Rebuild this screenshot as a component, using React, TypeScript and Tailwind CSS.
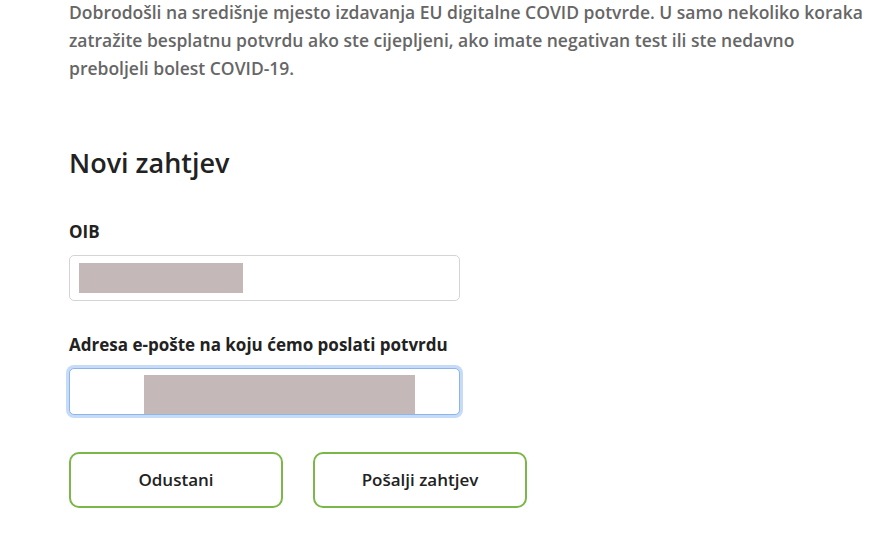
export default function App() {
  return (
    <div className="min-h-screen w-full bg-white pl-[69px] font-['Open_Sans',sans-serif]">
      <p className="-mt-[2px] text-[17.5px] font-semibold leading-[28px] text-[#666] whitespace-nowrap">
        Dobrodošli na središnje mjesto izdavanja EU digitalne COVID potvrde. U samo nekoliko koraka
        <br />
        zatražite besplatnu potvrdu ako ste cijepljeni, ako imate negativan test ili ste nedavno
        <br />
        preboljeli bolest COVID-19.
      </p>

      <h2 className="mt-[63px] text-[27px] font-semibold leading-[36px] text-[#222]">Novi zahtjev</h2>

      <label className="mt-[40px] block text-[17px] font-bold leading-[22px] text-[#222]">OIB</label>
      <div className="mt-[12px] flex h-[46px] w-[391px] items-center rounded-[5px] border border-[#d4d4d4] bg-white px-[9px]">
        <div className="h-[30px] w-[164px] bg-[#c4b8b8]" />
      </div>

      <label className="mt-[33px] block text-[17px] font-bold leading-[22px] text-[#222]">
        Adresa e-pošte na koju ćemo poslati potvrdu
      </label>
      <div className="mt-[12px] flex h-[47px] w-[391px] items-end rounded-[5px] border border-[#8eb4ec] bg-white pl-[74px] shadow-[0_0_0_3px_#c6dbf8]">
        <div className="h-[39px] w-[271px] bg-[#c4b8b8]" />
      </div>

      <div className="mt-[37px] flex gap-[30px]">
        <button className="h-[56px] w-[214px] rounded-[10px] border-2 border-[#7ab648] bg-white text-[17px] font-semibold text-[#222]">
          Odustani
        </button>
        <button className="h-[56px] w-[214px] rounded-[10px] border-2 border-[#7ab648] bg-white text-[17px] font-semibold text-[#222]">
          Pošalji zahtjev
        </button>
      </div>
    </div>
  );
}
